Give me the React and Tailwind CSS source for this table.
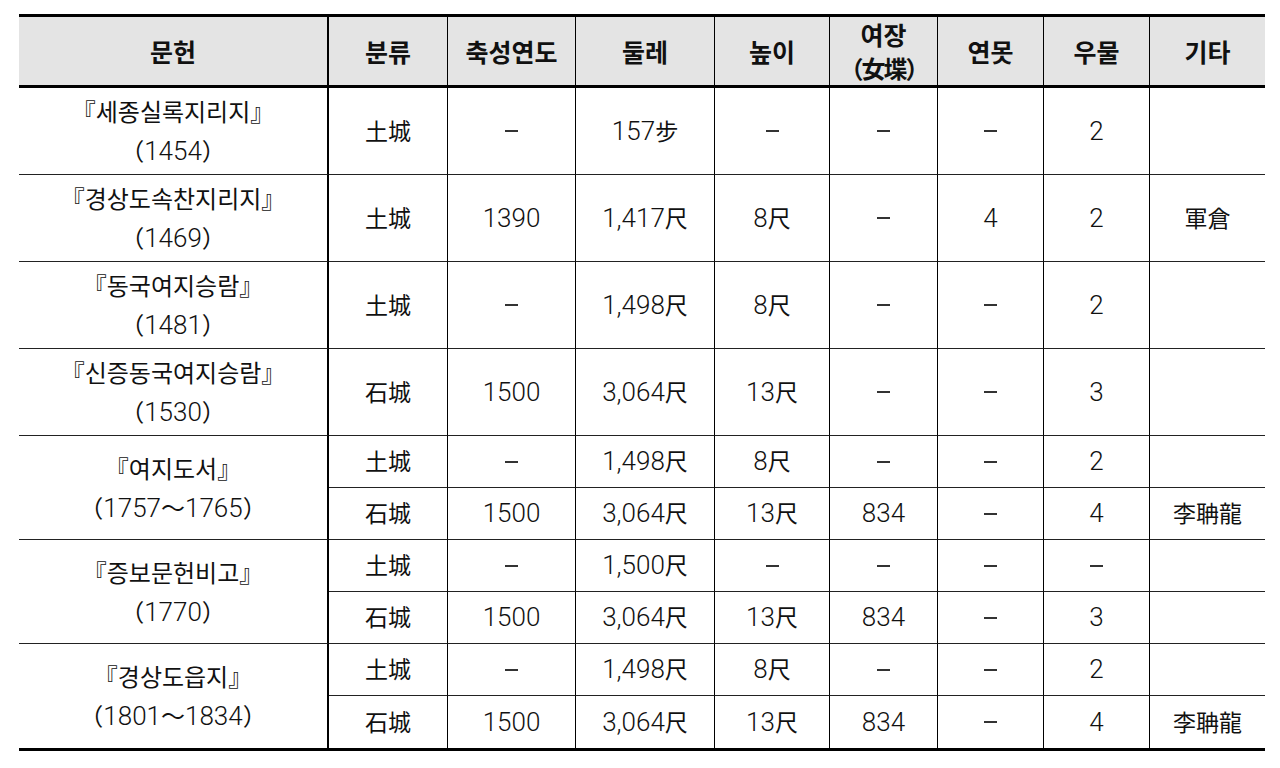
import React from "react";

const headers = ["문헌", "분류", "축성연도", "둘레", "높이", ["여장", "（女堞）"], "연못", "우물", "기타"];

const groups = [
  { title: "『세종실록지리지』", year: "（1454）", rows: [["土城", "-", "157步", "-", "-", "-", "2", ""]] },
  { title: "『경상도속찬지리지』", year: "（1469）", rows: [["土城", "1390", "1,417尺", "8尺", "-", "4", "2", "軍倉"]] },
  { title: "『동국여지승람』", year: "（1481）", rows: [["土城", "-", "1,498尺", "8尺", "-", "-", "2", ""]] },
  { title: "『신증동국여지승람』", year: "（1530）", rows: [["石城", "1500", "3,064尺", "13尺", "-", "-", "3", ""]] },
  {
    title: "『여지도서』",
    year: "（1757～1765）",
    rows: [
      ["土城", "-", "1,498尺", "8尺", "-", "-", "2", ""],
      ["石城", "1500", "3,064尺", "13尺", "834", "-", "4", "李聃龍"],
    ],
  },
  {
    title: "『증보문헌비고』",
    year: "（1770）",
    rows: [
      ["土城", "-", "1,500尺", "-", "-", "-", "-", ""],
      ["石城", "1500", "3,064尺", "13尺", "834", "-", "3", ""],
    ],
  },
  {
    title: "『경상도읍지』",
    year: "（1801～1834）",
    rows: [
      ["土城", "-", "1,498尺", "8尺", "-", "-", "2", ""],
      ["石城", "1500", "3,064尺", "13尺", "834", "-", "4", "李聃龍"],
    ],
  },
];

const widths = [310, 119, 128, 139, 115, 108, 106, 106, 115];

const cjk = /([\u3000-\u9fff\uac00-\ud7af\uff00-\uffef]+)/;

// digits are set larger than the hangul / hanja, as in the scan
const Mixed = ({ text, size = "text-[23px]" }) =>
  text.split(cjk).map((part, i) =>
    cjk.test(part) ? (
      <span key={i} className={`${size} font-normal`} style={{ fontFamily: '"Noto Sans CJK KR", sans-serif' }}>
        {part}
      </span>
    ) : (
      <span key={i}>{part}</span>
    )
  );

const Dash = () => (
  <div className="flex justify-center items-center">
    <div className="w-[13px] h-[2px] bg-[#333]" />
  </div>
);

const App = () => {
  const totalRows = groups.reduce((n, g) => n + g.rows.length, 0);
  let rowIndex = 0;

  return (
    <div
      className="w-[1280px] h-[768px] bg-white pt-[14px] pl-[19px] text-[#111] font-light"
      style={{ fontFamily: 'Roboto, "Noto Sans CJK KR", sans-serif' }}
    >
      <table className="table-fixed w-[1246px] border-separate border-spacing-0 border-t-[3px] border-b-[3px] border-black">
        <colgroup>
          {widths.map((w, i) => (
            <col key={i} style={{ width: w }} />
          ))}
        </colgroup>
        <thead>
          <tr className="h-[70px]">
            {headers.map((h, i) => (
              <th
                key={i}
                className={`bg-[#e4e4e4] border-b-[3px] border-black p-0 text-center align-middle font-bold text-[25px] leading-[34px] ${
                  i === 0 ? "border-r-2" : i < headers.length - 1 ? "border-r" : ""
                }`}
                style={{ fontFamily: '"Noto Sans CJK KR", sans-serif' }}
              >
                {Array.isArray(h) ? (
                  <div className="flex flex-col items-center">
                    <span>{h[0]}</span>
                    <span className="text-[24px] tracking-[-2px]">{h[1]}</span>
                  </div>
                ) : (
                  h
                )}
              </th>
            ))}
          </tr>
        </thead>
        <tbody>
          {groups.map((g, gi) =>
            g.rows.map((r, ri) => {
              rowIndex += 1;
              const last = rowIndex === totalRows;
              const tall = g.rows.length === 1;
              return (
                <tr key={`${gi}-${ri}`} className={tall ? "h-[87px]" : "h-[52px]"}>
                  {ri === 0 && (
                    <td
                      rowSpan={g.rows.length}
                      className={`border-r-2 border-black p-0 text-center align-middle text-[26px] leading-[38px] ${
                        gi === groups.length - 1 ? "" : "border-b border-b-[#222]"
                      }`}
                    >
                      <div className="flex flex-col items-center">
                        <span>
                          <Mixed text={g.title} size="text-[24px]" />
                        </span>
                        <span>
                          <Mixed text={g.year} size="text-[24px]" />
                        </span>
                      </div>
                    </td>
                  )}
                  {r.map((c, ci) => (
                    <td
                      key={ci}
                      className={`p-0 text-center align-middle text-[26px] ${
                        ci < r.length - 1 ? "border-r border-black" : ""
                      } ${last ? "" : "border-b border-b-[#222]"}`}
                    >
                      {c === "-" ? <Dash /> : <Mixed text={c} />}
                    </td>
                  ))}
                </tr>
              );
            })
          )}
        </tbody>
      </table>
    </div>
  );
};

export default App;
